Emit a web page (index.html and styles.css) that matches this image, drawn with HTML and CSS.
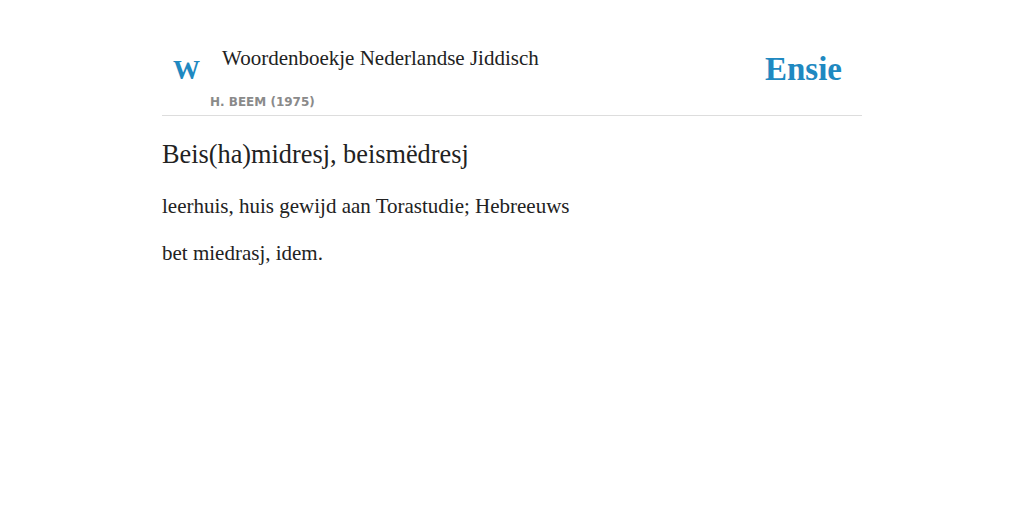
FILE: index.html
```html
<!DOCTYPE html>
<html lang="nl">
  <head>
    <meta charset="UTF-8" />
    <meta name="viewport" content="width=device-width, initial-scale=1.0" />
    <title>Beis(ha)midresj - Woordenboekje Nederlandse Jiddisch</title>
    <link rel="stylesheet" href="styles.css">
  </head>
  <body>
    <div class="page">
      <header class="header">
        <div class="source">
          <span class="logo">W</span>
          <div class="source-text">
            <h2 class="source-title">Woordenboekje Nederlandse Jiddisch</h2>
            <div class="source-author">H. BEEM (1975)</div>
          </div>
        </div>
        <a class="brand" href="#">Ensie</a>
      </header>

      <article class="entry">
        <h1 class="headword">Beis(ha)midresj, beismëdresj</h1>
        <p>leerhuis, huis gewijd aan Torastudie; Hebreeuws</p>
        <p>bet miedrasj, idem.</p>
      </article>
    </div>
  </body>
</html>
```

FILE: styles.css
```css
body {
  font-family: "Liberation Serif", "DejaVu Serif", serif;
  margin: 0;
  padding: 0;
  background-color: #fff;
  color: #222;
}
.page {
  width: 700px;
  margin: 0 auto;
  padding-top: 44px;
}
.header {
  display: flex;
  justify-content: space-between;
  align-items: flex-start;
  border-bottom: 1px solid #ddd;
  padding-bottom: 6px;
}
.source {
  display: flex;
  align-items: flex-start;
}
.logo {
  width: 48px;
  padding-left: 11px;
  box-sizing: border-box;
  margin-top: 10px;
  font-size: 27px;
  font-weight: bold;
  color: #1f89c1;
  line-height: 32px;
}
.source-title {
  font-size: 21px;
  font-weight: normal;
  margin: 0 0 0 12px;
  line-height: 28px;
}
.source-author {
  font-family: "DejaVu Sans", sans-serif;
  font-size: 12px;
  font-weight: bold;
  color: #8a8a8a;
  margin-top: 23px;
}
.brand {
  font-size: 33px;
  font-weight: bold;
  color: #1f89c1;
  text-decoration: none;
  margin: 8px 20px 0 0;
  line-height: 34px;
}
.entry {
  padding-top: 23px;
}
.headword {
  font-size: 26.3px;
  font-weight: normal;
  margin: 0 0 22px;
  line-height: 32px;
}
.entry p {
  font-size: 21px;
  margin: 0 0 20px;
  line-height: 27px;
}
```
